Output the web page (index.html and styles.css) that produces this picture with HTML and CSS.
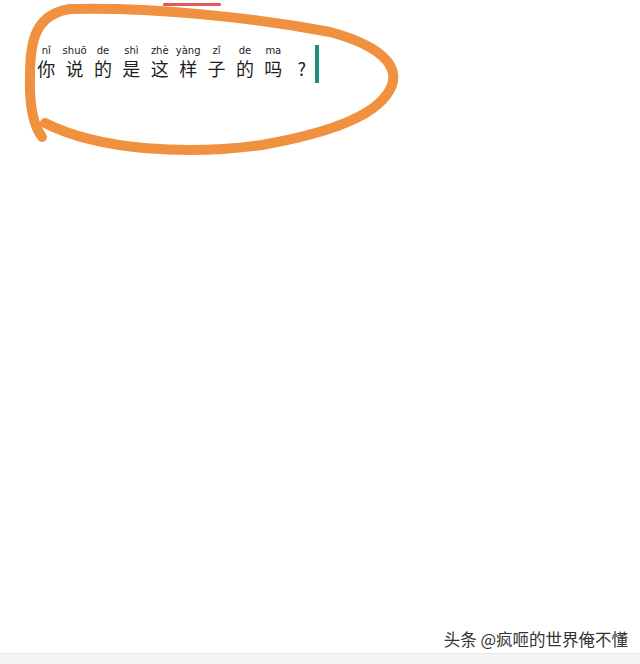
FILE: index.html
```html
<!DOCTYPE html>
<html lang="zh">
<head>
<meta charset="utf-8">
<link rel="stylesheet" href="styles.css">
</head>
<body>
<div class="page">
  <main class="canvas">
    <div class="tab-mark"></div>
    <div class="sentence">
      <div class="cell"><span class="py">nǐ</span><span class="hz">你</span></div>
      <div class="cell"><span class="py">shuō</span><span class="hz">说</span></div>
      <div class="cell"><span class="py">de</span><span class="hz">的</span></div>
      <div class="cell"><span class="py">shì</span><span class="hz">是</span></div>
      <div class="cell"><span class="py">zhè</span><span class="hz">这</span></div>
      <div class="cell"><span class="py">yàng</span><span class="hz">样</span></div>
      <div class="cell"><span class="py">zǐ</span><span class="hz">子</span></div>
      <div class="cell"><span class="py">de</span><span class="hz">的</span></div>
      <div class="cell"><span class="py">ma</span><span class="hz">吗</span></div>
      <div class="cell"><span class="py">&nbsp;</span><span class="hz">?</span></div>
      <div class="caret"></div>
    </div>
    <svg class="loop" width="410" height="165" viewBox="0 0 410 165" aria-hidden="true">
      <path d="M 42 137 C 33 125, 29 105, 30 75 C 30 40, 36 14, 70 9 C 150 7, 250 17, 330 32 C 378 45, 399 64, 392 85 C 381 115, 330 133, 262 145 C 190 155, 100 151, 45 123" fill="none" stroke="#f0913f" stroke-width="10" stroke-linecap="round" stroke-linejoin="round"/>
    </svg>
  </main>
  <footer class="footer">
    <div class="watermark">头条 @疯咂的世界俺不懂</div>
    <div class="strip"></div>
  </footer>
</div>
</body>
</html>
```

FILE: styles.css
```css
* { box-sizing: border-box; }
html, body { margin: 0; padding: 0; background: #ffffff; }
.page {
  width: 640px;
  height: 664px;
  display: flex;
  flex-direction: column;
  overflow: hidden;
}
.canvas {
  position: relative;
  flex: 1;
}
.tab-mark {
  margin-left: 163px;
  margin-top: 3px;
  width: 58px;
  height: 3px;
  background: #e05a62;
  border-radius: 1px;
}
.sentence {
  display: flex;
  align-items: flex-start;
  margin-top: 39px;
  margin-left: 32px;
}
.cell {
  width: 28.4px;
  display: flex;
  flex-direction: column;
  align-items: center;
}
.py {
  font-family: "DejaVu Sans", "Noto Sans", sans-serif;
  font-size: 10px;
  line-height: 12px;
  color: #222;
  white-space: nowrap;
}
.hz {
  font-family: "Noto Sans CJK SC", sans-serif;
  font-weight: 400;
  font-size: 18px;
  line-height: 22px;
  color: #1e1e1e;
}
.caret {
  width: 4px;
  height: 38px;
  margin-left: -1px;
  background: #1a8f80;
}
.loop {
  position: absolute;
  left: 0;
  top: 0;
  pointer-events: none;
}
.footer {
  display: flex;
  flex-direction: column;
}
.watermark {
  align-self: flex-end;
  margin-right: 12px;
  margin-bottom: 4px;
  font-family: "Noto Sans CJK SC", sans-serif;
  font-size: 16.5px;
  line-height: 20px;
  color: #333;
  text-shadow: 0 0 2px #fff, 0 0 1px #fff;
}
.strip {
  height: 11px;
  background: #f3f4f6;
  border-top: 1px solid #e8e9eb;
}
```
